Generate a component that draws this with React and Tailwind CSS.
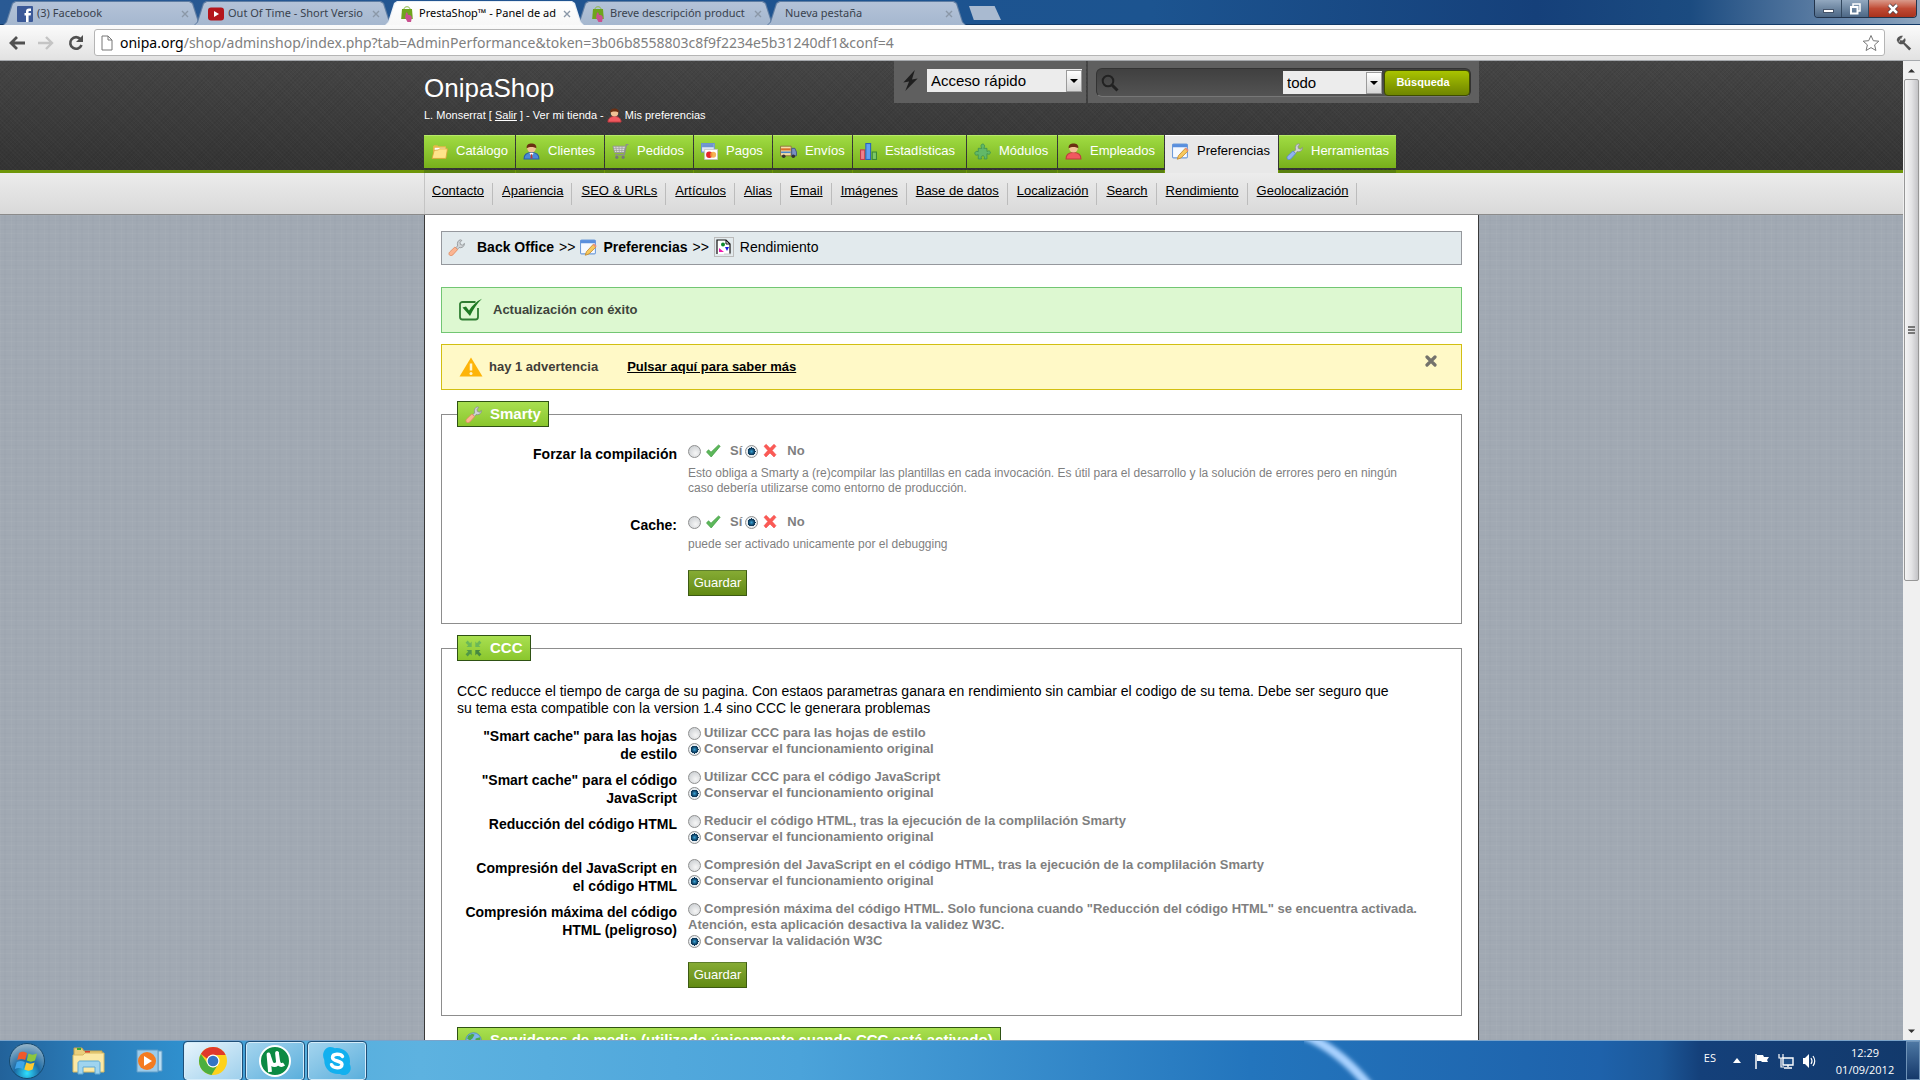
import React, { useState } from 'react';

const browserTabs = [
  { title: '(3) Facebook', icon: 'facebook' },
  { title: 'Out Of Time - Short Versio', icon: 'youtube' },
  { title: 'PrestaShop™ - Panel de ad', icon: 'presta', active: true },
  { title: 'Breve descripción product', icon: 'presta' },
  { title: 'Nueva pestaña' },
];

const menu = [
  { label: 'Catálogo', icon: 'folder', width: 'w-[91px]' },
  { label: 'Clientes', icon: 'client', width: 'w-[88px]' },
  { label: 'Pedidos', icon: 'cart', width: 'w-[88px]' },
  { label: 'Pagos', icon: 'payment', width: 'w-[78px]' },
  { label: 'Envíos', icon: 'truck', width: 'w-[79px]' },
  { label: 'Estadísticas', icon: 'stats', width: 'w-[113px]' },
  { label: 'Módulos', icon: 'module', width: 'w-[90px]' },
  { label: 'Empleados', icon: 'employee', width: 'w-[106px]' },
  { label: 'Preferencias', icon: 'prefs', width: 'w-[113px]', active: true },
  { label: 'Herramientas', icon: 'tools', width: 'w-[117px]' },
];

const submenu = [
  'Contacto', 'Apariencia', 'SEO & URLs', 'Artículos', 'Alias', 'Email', 'Imágenes',
  'Base de datos', 'Localización', 'Search', 'Rendimiento', 'Geolocalización',
];

const smartyRows = [
  {
    name: 'force_compile',
    label: 'Forzar la compilación',
    height: 'h-[71px]',
    help: 'Esto obliga a Smarty a (re)compilar las plantillas en cada invocación. Es útil para el desarrollo y la solución de errores pero en ningún\ncaso debería utilizarse como entorno de producción.',
  },
  {
    name: 'cache',
    label: 'Cache:',
    height: 'h-[57px]',
    help: 'puede ser activado unicamente por el debugging',
  },
];

const cccRows = [
  {
    name: 'css',
    label: '"Smart cache" para las hojas\nde estilo',
    on: 'Utilizar CCC para las hojas de estilo',
    off: 'Conservar el funcionamiento original',
  },
  {
    name: 'js',
    label: '"Smart cache" para el código\nJavaScript',
    on: 'Utilizar CCC para el código JavaScript',
    off: 'Conservar el funcionamiento original',
  },
  {
    name: 'html',
    label: 'Reducción del código HTML',
    on: 'Reducir el código HTML, tras la ejecución de la complilación Smarty',
    off: 'Conservar el funcionamiento original',
  },
  {
    name: 'js_html',
    label: 'Compresión del JavaScript en\nel código HTML',
    on: 'Compresión del JavaScript en el código HTML, tras la ejecución de la complilación Smarty',
    off: 'Conservar el funcionamiento original',
  },
  {
    name: 'high',
    label: 'Compresión máxima del código\nHTML (peligroso)',
    on: 'Compresión máxima del código HTML. Solo funciona cuando "Reducción del código HTML" se encuentra activada.\nAtención, esta aplicación desactiva la validez W3C.',
    off: 'Conservar la validación W3C',
  },
];

const Person = ({ body, dark }) => (
  <>
    <path d="M1 15c0-4 3-6 7-6s7 2 7 6z" fill={body} stroke={dark} strokeWidth="1" />
    <circle cx="8" cy="5" r="4" fill="#f0c295" />
    <path d="M3.500 5C3 1.500 5.500.5 8 .5S13 1.500 12.500 5C11 3.500 6 3 3.500 5z" fill="#6b2f12" />
  </>
);

const Wrench = ({ handle, edge }) => (
  <>
    <path d="M9 6.500 7 8.500l1.500 1.500 2-2c2 .6 4-.3 4.700-2.200l.3-1.600-2 1.600-1.900-.8-.2-1.900L13 1.300l-1.500-.5C9.500 1.200 8.300 3.500 9 6.500z" fill="#cfd3d6" stroke="#85898c" strokeWidth=".7" />
    <path d="M6.500 7.500 9 10l-4.500 5c-1 1-2.300.8-3 .2s-.9-2 .1-3z" fill={handle} stroke={edge} strokeWidth=".8" />
  </>
);

const shapes = {
  facebook: (
    <>
      <rect width="16" height="16" rx="1" fill="#3b5998" />
      <path d="M9 16V9.500H7.500V7H9V5.500C9 3.500 10 2.500 12 2.500h2V5h-1.500c-.7 0-1 .3-1 1v1H14l-.4 2.500h-2V16z" fill="#fff" />
    </>
  ),
  youtube: (
    <>
      <rect width="16" height="13" y="1.500" rx="3" fill="#b4151b" />
      <path d="M6 5v6l5-3z" fill="#fff" />
    </>
  ),
  presta: (
    <>
      <path d="M5 3c0-3 6-3 6 0" fill="none" stroke="#8ab648" strokeWidth="1" />
      <path d="M3 3h10l.8 10H2.200z" fill="#6ea51c" />
      <path d="M7 6.500c1.500-.5 1.800 1 2 2.500 2 0 4 .5 3.800 3L12 16H8.500L6 11.500z" fill="#c9508f" />
    </>
  ),
  folder: (
    <>
      <path d="M2 13V3l1-1h3l1 1h7v10z" fill="#e8b94a" />
      <path d="M3.500 4.500h10v6h-10z" fill="#fff" />
      <path d="M1 14.500 3 7l4-.5L8 5.500h7.500L14 14.500z" fill="#ffe48a" stroke="#dca637" strokeWidth=".8" />
    </>
  ),
  client: (
    <>
      <Person body="#4b8ad8" dark="#2a5ca8" />
      <path d="M6 9.500h4l-2 3z" fill="#fff" />
      <path d="M7.500 10.500h1l.5 4h-2z" fill="#c0392b" />
    </>
  ),
  employee: <Person body="#f0595f" dark="#c03a3f" />,
  cart: (
    <>
      <path d="M15.500 1.500h-2L11.500 11H3" fill="none" stroke="#8d8d8d" strokeWidth="1.300" />
      <path d="M.8 3h12l-1.500 6H2.500z" fill="#dedede" stroke="#909090" strokeWidth=".8" />
      <path d="M3.500 3 4.500 9M6.500 3l.4 6M9.500 3l-.3 6M1.500 5h11M2 7h10" stroke="#9a9a9a" strokeWidth=".7" />
      <circle cx="4.500" cy="13.500" r="1.500" fill="#777" />
      <circle cx="10.500" cy="13.500" r="1.500" fill="#777" />
    </>
  ),
  payment: (
    <>
      <rect x=".5" y=".5" width="12" height="8" fill="#dfe9f7" stroke="#6d93cf" />
      <path d="M1 1h11v3H1z" fill="#6d93cf" />
      <rect x="3.500" y="6" width="12" height="9.500" fill="#fff" stroke="#c5c5c5" strokeWidth=".8" />
      <circle cx="7.800" cy="11" r="3" fill="#e5262b" />
      <circle cx="11.500" cy="11" r="2.800" fill="#f3a73a" opacity=".85" />
    </>
  ),
  truck: (
    <>
      <path d="M.5 3h10v9H.5z" fill="#f4dca4" stroke="#8a6a3b" strokeWidth=".8" />
      <path d="M1 5h9v2H1z" fill="#d9702a" />
      <path d="M1 8h9v1.500H1z" fill="#4b86c8" />
      <path d="M11 5h3l1.500 3.500V12H11z" fill="#7a8fc4" stroke="#3f4f86" strokeWidth=".8" />
      <circle cx="3.500" cy="12.500" r="1.700" fill="#333" />
      <circle cx="12.500" cy="12.500" r="1.700" fill="#333" />
    </>
  ),
  stats: (
    <>
      <rect x=".5" y="6.500" width="4" height="9" fill="#ef7f8b" stroke="#c33c4c" />
      <rect x="5.500" y=".5" width="4.500" height="15" fill="#5ea0f2" stroke="#2a62bd" />
      <rect x="11.500" y="8.500" width="4" height="7" fill="#7cc768" stroke="#3b8a35" />
    </>
  ),
  module: (
    <path d="M5 5h2.500C5.800 2.800 6.800 1 8.200 1s2.600 1.800 1 4h3v3c2-1.200 3.200-.3 3.200 1s-1.200 2.200-3.200 1v5H9.500c1-2-.1-3-1.200-3s-2.200 1-1.200 3H4v-4c-2 1-3.200.2-3.200-1.200S2 7.200 4 8.200V5z" fill="#62b868" stroke="#3f9150" strokeWidth=".8" />
  ),
  prefs: (
    <>
      <rect x=".5" y="1" width="14" height="13" rx="1" fill="#f5f9ff" stroke="#6f9bd8" />
      <path d="M.5 1h14v3H.5z" fill="#5a8fdd" />
      <path d="m6 12 6.500-7L15 7.500 8.500 14l-3.500 1.300z" fill="#f7c95e" stroke="#c48a2d" strokeWidth=".8" />
      <path d="m12 5.500 1.200-1.200 2.500 2.400L14.500 8z" fill="#e88f7a" />
    </>
  ),
  tools: <Wrench handle="#8fb2ee" edge="#5f86cf" />,
  wrench: <Wrench handle="#fbb592" edge="#e08d63" />,
  broken: (
    <>
      <path d="M1 15V1h9l4 4v10" fill="#fff" stroke="#111" strokeWidth="1.200" />
      <path d="M10 1v4h4" fill="none" stroke="#111" strokeWidth="1" />
      <circle cx="7" cy="5.500" r="2" fill="#0b8a2d" />
      <path d="m3 9 5 4H3z" fill="#f019b0" />
      <path d="M9 8h4l-2 4z" fill="#1717e6" />
      <path d="M8 15h7" stroke="#ccc" />
    </>
  ),
  ccc: (
    <g fill="#62b35c" opacity=".85">
      <path d="M.5 2.500 2.500.5 4.800 3 6.300 1.500v5H1.500L3 5z" />
      <path d="M15.500 2.500l-2-2L11.200 3 9.700 1.500v5h4.800L13 5z" />
      <path d="M.5 13.500l2 2L4.800 13l1.500 1.500v-5H1.500L3 11z" fill="#458f4a" />
      <path d="M15.500 13.500l-2 2-2.300-2.500-1.500 1.500v-5h4.800L13 11z" fill="#3a7d42" />
    </g>
  ),
  globe: (
    <>
      <circle cx="8" cy="8" r="7.300" fill="#7db7e8" stroke="#4d86bb" strokeWidth=".8" />
      <path d="M3 3.500c3-2 5-2 6-1L7 6 4.500 8 2 6zM10 6l4-1 .5 4-3 4-2-3z" fill="#4aa94a" />
    </>
  ),
  check: <path d="m1.500 9 2-2.200L6 9.200 13.500 2l1.700 1.200L6.200 14z" fill="#5cb85a" stroke="#3f9a41" strokeWidth=".7" />,
  cross: <path d="m2 3.300 2.200-2L8 5.200l4-4 2 2.100L10.200 7.500l3.800 4.200-2 2.300L8 10l-4 4-2-2.200L5.800 7.500z" fill="#fb5a55" stroke="#f03c3c" strokeWidth=".5" />,
};

const Icon = ({ name, className = 'size-4' }) => (
  <svg viewBox="0 0 16 16" className={`${className} shrink-0`} aria-hidden="true">{shapes[name]}</svg>
);

const BrowserTab = ({ tab }) => (
  <div
    className={`relative -ml-2 h-6 w-[199px] px-px pt-px [clip-path:polygon(0_100%,3px_88%,9px_8%,12px_0,calc(100%-12px)_0,calc(100%-9px)_8%,calc(100%-3px)_88%,100%_100%)] ${tab.active ? 'z-10 bg-[#e8eef5]' : 'bg-[#5f7da3]'}`}
  >
    <div
      className={`flex h-full items-center pl-[13px] pr-[10px] [clip-path:polygon(0_100%,3px_88%,9px_8%,12px_0,calc(100%-12px)_0,calc(100%-9px)_8%,calc(100%-3px)_88%,100%_100%)] ${tab.active ? 'bg-linear-to-b from-white to-[#f7f7f7]' : 'bg-linear-to-b from-[#b4c3d8] to-[#a5b7cf]'}`}
    >
      {tab.icon && <Icon name={tab.icon} className="mr-1 size-4" />}
      <span className={`flex-1 whitespace-nowrap text-[11px] ${tab.icon ? '' : 'pl-1'} ${tab.active ? 'text-black' : 'text-[#39424e]'}`}>
        {tab.title}
      </span>
      <button type="button" aria-label="Cerrar pestaña" className="flex w-3 justify-center">
        <svg viewBox="0 0 8 8" className="size-2"><path d="m1 1 6 6M7 1 1 7" stroke="#8b98a8" strokeWidth="1.400" /></svg>
      </button>
    </div>
  </div>
);

const Browser = () => (
  <div className="shrink-0 font-['Noto_Sans',sans-serif]">
    <div className="flex h-[25px] justify-between border-b border-[#123a68] bg-[linear-gradient(90deg,#2a5a94_0%,#1f5390_30%,#1c5490_60%,#15407a_80%,#1b4b80_88%,#6f8cae_97%,#8ea6bf_100%)]">
      <div className="flex pl-[11px] pt-px">
        {browserTabs.map((tab) => <BrowserTab key={tab.title} tab={tab} />)}
        <button
          type="button"
          aria-label="Nueva pestaña"
          className="ml-[3px] mt-[5px] h-[14px] w-8 bg-[#a9bad0] [clip-path:polygon(0_0,80%_0,100%_100%,15%_100%)]"
        />
      </div>
      <div className="mr-[3px] flex h-[18px] overflow-hidden rounded-b border border-t-0 border-[#22344c]">
        <button type="button" aria-label="Minimizar" className="flex w-[27px] items-end justify-center border-r border-[#33485f] bg-linear-to-b from-[#92a8bf] to-[#4c6785] pb-1">
          <span className="h-1 w-[11px] border border-[#44546a] bg-white" />
        </button>
        <button type="button" aria-label="Restaurar" className="flex w-[27px] items-center justify-center border-r border-[#33485f] bg-linear-to-b from-[#92a8bf] to-[#4c6785]">
          <svg viewBox="0 0 12 12" className="size-3"><path d="M4 3V1h7v7H9" fill="none" stroke="#fff" strokeWidth="1.500" /><path d="M2 4h6.500v6.500H2z" fill="none" stroke="#fff" strokeWidth="2" /></svg>
        </button>
        <button type="button" aria-label="Cerrar" className="flex w-[47px] items-center justify-center bg-linear-to-b from-[#d99a8b] via-[#c04a34] to-[#a8321d]">
          <svg viewBox="0 0 12 12" className="size-3"><path d="m2 2 8 8M10 2l-8 8" stroke="#4b3b42" strokeWidth="4" /><path d="m2 2 8 8M10 2l-8 8" stroke="#fff" strokeWidth="2.500" /></svg>
        </button>
      </div>
    </div>
    <div className="flex h-9 items-center border-b border-[#a6a9ad] bg-linear-to-b from-[#fbfbfb] to-[#e2e2e2] pl-[9px] pr-2">
      <button type="button" aria-label="Atrás">
        <svg viewBox="0 0 16 16" className="size-4"><path d="M8 2 2 8l6 6M2 8h14" fill="none" stroke="#505050" strokeWidth="2.800" /></svg>
      </button>
      <button type="button" aria-label="Adelante" className="ml-[13px]">
        <svg viewBox="0 0 16 16" className="size-4"><path d="m8 2 6 6-6 6M14 8H0" fill="none" stroke="#c4c4c4" strokeWidth="2.400" /></svg>
      </button>
      <button type="button" aria-label="Recargar" className="ml-[14px]">
        <svg viewBox="0 0 16 16" className="size-4"><path d="M12.500 4.200A5.800 5.800 0 1 0 13.500 10" fill="none" stroke="#505050" strokeWidth="2.600" /><path d="M15 0v7H8z" fill="#505050" /></svg>
      </button>
      <div className="ml-[10px] flex h-[27px] flex-1 items-center rounded-[3px] border border-[#b5b5b5] bg-white pl-1.5 pr-1">
        <svg viewBox="0 0 12 16" className="mr-[7px] h-4 w-3"><path d="M1 1h6l4 4v10H1zM7 1v4h4" fill="#fff" stroke="#777" /></svg>
        <span className="flex-1 text-sm text-[#808080]"><span className="text-black">onipa.org</span>/shop/adminshop/index.php?tab=AdminPerformance&amp;token=3b06b8558803c8f9f2234e5b31240df1&amp;conf=4</span>
        <button type="button" aria-label="Añadir a marcadores">
          <svg viewBox="0 0 18 18" className="size-[18px]"><path d="m9 1.500 2.300 5.200 5.500.5-4.200 3.700 1.300 5.600L9 13.600l-4.900 2.900 1.300-5.600L1.200 7.200l5.500-.5z" fill="#fff" stroke="#777" strokeLinejoin="round" /></svg>
        </button>
      </div>
      <button type="button" aria-label="Configuración" className="ml-[11px]">
        <svg viewBox="0 0 16 16" className="size-4"><path d="M7 .8 4.500 3.300l.3 1.900 1.700.3L9 3c1 2 .6 3.400-.4 4.500l6.600 6-2 2-6-6.500C5.500 9.800 2 9.500.8 5.500L3 7.500z" fill="#555" /><path d="M.8 5.500C.5 3 3.500 0 7 .8L4.500 3.300l-1.700 4z" fill="#555" /></svg>
      </button>
    </div>
  </div>
);

const ArrowBox = () => (
  <span className="pointer-events-none absolute inset-y-px right-0 flex w-4 items-center justify-center border border-[#9a9a9a] bg-linear-to-b from-white to-[#d5d5d5]">
    <svg viewBox="0 0 8 4" className="h-1 w-2"><path d="M0 0h8L4 4z" fill="#000" /></svg>
  </span>
);

const Header = () => (
  <header className="border-b-3 border-[#6f9609] bg-[repeating-linear-gradient(45deg,rgba(255,255,255,0.02)_0_1px,transparent_1px_3px),repeating-linear-gradient(135deg,rgba(0,0,0,0.06)_0_1px,transparent_1px_3px),linear-gradient(#454545,#333333)]">
    <div className="mx-auto max-w-[1055px]">
      <div className="flex h-[74px] justify-between">
        <div className="pt-3 text-white">
          <h1 className="text-[26px] leading-[30px]">OnipaShop</h1>
          <p className="mt-1 flex items-center whitespace-pre text-[11px] leading-4">
            L. Monserrat [ <a href="#salir" className="underline">Salir</a> ] - <a href="#tienda">Ver mi tienda</a> -{' '}
            <Icon name="employee" className="mr-[3px] size-[15px]" />
            <a href="#perfil">Mis preferencias</a>
          </p>
        </div>
        <div className="flex h-[42px] gap-0.5">
          <div className="flex items-start bg-[#5f5f5f] pl-2 pr-1 pt-2">
            <svg viewBox="0 0 18 24" className="mr-[7px] h-[23px] w-[18px]"><path d="M13 1 1 14l6-1-4 10L16 10l-6 1z" fill="#1f1f1f" /></svg>
            <div className="relative">
              <select aria-label="Acceso rápido" className="h-[23px] w-[155px] appearance-none bg-[#ececec] pl-1 text-[15px] leading-[23px] text-black">
                <option>Acceso rápido</option>
              </select>
              <ArrowBox />
            </div>
          </div>
          <form className="bg-[#5f5f5f] px-2 pt-[7px]" onSubmit={(e) => e.preventDefault()}>
            <div className="flex h-[29px] w-[375px] items-center rounded-md border border-[#333] border-b-[#777] bg-linear-to-b from-[#404040] to-[#535353] pl-1">
              <svg viewBox="0 0 18 18" className="size-[18px]"><circle cx="7" cy="7" r="5.300" fill="none" stroke="#222" strokeWidth="2" /><path d="m11 11 5.500 5.500" stroke="#222" strokeWidth="3" /></svg>
              <input type="text" aria-label="Buscar" className="h-6 min-w-0 flex-1 bg-transparent px-1 text-[15px] text-white" />
              <div className="relative">
                <select aria-label="Buscar en" className="h-[23px] w-[99px] appearance-none bg-[#ececec] pl-1 text-[15px] leading-[23px] text-black">
                  <option>todo</option>
                </select>
                <ArrowBox />
              </div>
              <button type="submit" className="ml-0.5 h-[26px] w-[86px] rounded border border-[#3e4c00] bg-linear-to-b from-[#a9c400] to-[#6f8500] pr-2 text-[11px] font-bold text-white">Búsqueda</button>
            </div>
          </form>
        </div>
      </div>
      <nav className="-mb-[3px]">
        <ul className="flex h-[38px] gap-px">
          {menu.map((item) => (
            <li key={item.label} className={`${item.width} border-b-3 ${item.active ? 'border-[#e8e8e8] bg-[#e8e8e8]' : 'border-[#59800f]'}`}>
              <a
                href={`#${item.icon}`}
                className={`flex h-[33px] items-center gap-2 border-t pb-0.5 pl-[7px] text-[13px] ${item.active ? 'border-white text-black' : 'border-[#b7ea68] bg-linear-to-b from-[#a0dc42] to-[#78b01a] text-white'}`}
              >
                <Icon name={item.icon} className="size-[17px]" />
                {item.label}
              </a>
            </li>
          ))}
        </ul>
      </nav>
    </div>
  </header>
);

const Submenu = () => (
  <div className="border-b border-[#8b8b8b] bg-linear-to-b from-[#ececec] to-[#d9d9d9]">
    <ul className="mx-auto flex h-[41px] max-w-[1055px] items-start border-l border-[#c4c4c4] pt-[10px]">
      {submenu.map((item) => (
        <li key={item} className="h-[22px] border-r border-[#bcbcbc] pl-[9px] pr-2 text-[13px] leading-4 first:pl-[7px]">
          <a href={`#${item}`} className="text-black underline">{item}</a>
        </li>
      ))}
    </ul>
  </div>
);

const Radio = (props) => (
  <input
    type="radio"
    className="size-[13px] shrink-0 appearance-none rounded-full border border-[#8e8f8f] bg-[radial-gradient(circle_at_60%_65%,#f6f6f6_0,#d0d3d6_75%)] align-[-3px] checked:bg-[radial-gradient(circle,#3aa3d6_0,#0d3c5e_3px,#0d3c5e_4px,#e8ecef_4px)]"
    {...props}
  />
);

const Panel = ({ icon, title, className, children }) => (
  <fieldset className={`border border-[#8d8d8d] px-[15px] ${className}`}>
    <legend className="flex h-[26px] items-center gap-2 border border-[#2f5214] bg-linear-to-b from-[#a9e050] to-[#8ac62c] px-[7px] text-[15px] font-bold leading-6 text-white">
      <Icon name={icon} className="size-[17px]" />
      {title}
    </legend>
    {children}
  </fieldset>
);

const SaveButton = () => (
  <button type="submit" className="ml-[231px] block h-[26px] w-[59px] border border-[#3c5a12] border-t-[#5d7d2b] bg-linear-to-b from-[#86ab34] to-[#628a12] text-[13px] text-white">
    Guardar
  </button>
);

const SmartyRow = ({ row }) => {
  const [value, setValue] = useState('no');
  return (
    <div className={`flex gap-[11px] ${row.height}`}>
      <span className="w-[220px] shrink-0 pt-1 text-right text-[14px] font-bold leading-[18px] text-black">{row.label}</span>
      <div className="text-[#7f7f7f]">
        <div className="flex h-5 items-center text-[13px] font-bold">
          <Radio id={`${row.name}_on`} name={row.name} checked={value === 'si'} onChange={() => setValue('si')} />
          <label htmlFor={`${row.name}_on`} className="ml-1 mr-[3px] flex items-center gap-[9px]">
            <Icon name="check" />Sí
          </label>
          <Radio id={`${row.name}_off`} name={row.name} checked={value === 'no'} onChange={() => setValue('no')} />
          <label htmlFor={`${row.name}_off`} className="ml-1 flex items-center gap-[9px]">
            <Icon name="cross" />No
          </label>
        </div>
        <p className="mt-[5px] whitespace-pre-line text-xs leading-[15px]">{row.help}</p>
      </div>
    </div>
  );
};

const CccRow = ({ row }) => {
  const [value, setValue] = useState('off');
  return (
    <div className="flex min-h-11 gap-[11px]">
      <span className="w-[220px] shrink-0 whitespace-pre pt-1 text-right text-[14px] font-bold leading-[18px] text-black">{row.label}</span>
      <div className="pt-0.5 text-[13px] font-bold leading-4 text-[#7f7f7f]">
        {['on', 'off'].map((key) => (
          <div key={key} className="whitespace-pre-line">
            <Radio
              id={`${row.name}_${key}`}
              name={row.name}
              checked={value === key}
              onChange={() => setValue(key)}
            />
            <label htmlFor={`${row.name}_${key}`} className="ml-[3px]">{row[key]}</label>
          </div>
        ))}
      </div>
    </div>
  );
};

const Content = () => (
  <main className="mx-auto max-w-[1055px] border-x border-[#3a3a3a] bg-white px-4 pb-10 pt-4">
    <div className="flex h-[34px] items-center border border-[#95989d] bg-[#e2eaed] pb-0.5 pl-1.5 text-sm text-black">
      <Icon name="wrench" className="mr-3 size-[17px]" />
      <a href="#inicio" className="font-bold">Back Office</a>
      <span className="mx-[5px]">&gt;&gt;</span>
      <Icon name="prefs" className="mr-1.5 size-[17px]" />
      <a href="#preferencias" className="font-bold">Preferencias</a>
      <span className="mx-[5px]">&gt;&gt;</span>
      <span className="mr-1.5 border border-[#bbb] p-px"><Icon name="broken" /></span>
      Rendimiento
    </div>

    <div className="mt-[22px] flex h-[46px] items-center border border-[#72c673] bg-[#ddf8d1] pl-4 text-[13px] font-bold text-[#3d443c]">
      <svg viewBox="0 0 24 24" className="mr-[11px] size-6">
        <path d="M17.500 4H4.500C3 4 2 5 2 6v13c0 1.500 1 2.500 2.500 2.500h13c1.500 0 2.500-1 2.500-2.500V10" fill="none" stroke="#2f7d32" strokeWidth="1.800" />
        <path d="m4.500 9.500 3.500-1 3 4C14 8 18 3.500 24 .8 19 5.500 15 11.500 12 18z" fill="#1f7a24" />
      </svg>
      Actualización con éxito
    </div>

    <div className="mt-[11px] flex h-[46px] items-center border border-[#d2bf12] bg-[#fff9c7] pl-[17px] pr-6 text-[13px] font-bold text-[#3f3d38]">
      <svg viewBox="0 0 24 20" className="mr-1.5 h-5 w-6">
        <path d="M12 .5 23.500 19.500H.5z" fill="#fdb409" />
        <path d="M12 6.500v7" stroke="#fff6d0" strokeWidth="2.500" />
        <circle cx="12" cy="16.500" r="1.500" fill="#fff6d0" />
      </svg>
      hay 1 advertencia
      <a href="#advertencias" className="ml-[29px] text-black underline">Pulsar aquí para saber más</a>
      <button type="button" aria-label="Cerrar" className="mb-3 ml-auto">
        <svg viewBox="0 0 12 12" className="size-3"><path d="m2 2 8 8M10 2l-8 8" stroke="#74736c" strokeWidth="3.200" strokeLinecap="round" /></svg>
      </button>
    </div>

    <form onSubmit={(e) => e.preventDefault()}>
      <Panel icon="wrench" title="Smarty" className="mt-[11px] pb-[27px]">
        <div className="pt-[14px]">
          {smartyRows.map((row) => <SmartyRow key={row.name} row={row} />)}
        </div>
        <div className="pt-px"><SaveButton /></div>
      </Panel>
    </form>

    <form onSubmit={(e) => e.preventDefault()}>
      <Panel icon="ccc" title="CCC" className="mt-[11px] pb-[27px]">
        <p className="whitespace-pre-line pb-1.5 pt-[22px] text-[14px] leading-[17px] text-black">
          {'CCC reducce el tiempo de carga de su pagina. Con estaos parametras ganara en rendimiento sin cambiar el codigo de su tema. Debe ser seguro que\nsu tema esta compatible con la version 1.4 sino CCC le generara problemas'}
        </p>
        {cccRows.map((row) => <CccRow key={row.name} row={row} />)}
        <div className="pt-[13px]"><SaveButton /></div>
      </Panel>
    </form>

    <Panel icon="globe" title="Servidores de media (utilizado únicamente cuando CCC está activado)" className="mt-[11px] pb-10" />
  </main>
);

const ScrollBar = () => (
  <div className="flex w-[17px] shrink-0 flex-col items-center bg-[#f0f0f0]">
    <svg viewBox="0 0 17 18" className="h-[18px] w-[17px]"><path d="M5 11.500 8.500 8l3.500 3.500z" fill="#333" /></svg>
    <div className="flex h-[502px] w-[15px] flex-col items-center justify-center gap-px rounded-xs border border-[#979797] bg-linear-to-r from-[#f5f5f5] via-[#e3e3e5] to-[#c3c3c6]">
      <span className="h-0.5 w-[7px] bg-[#777]" />
      <span className="h-0.5 w-[7px] bg-[#777]" />
      <span className="h-0.5 w-[7px] bg-[#777]" />
    </div>
    <svg viewBox="0 0 17 18" className="mt-auto h-[18px] w-[17px]"><path d="M5 7.500h7L8.500 11z" fill="#333" /></svg>
  </div>
);

const taskButton = 'flex h-[38px] w-[58px] items-center justify-center rounded-[3px] border border-[#d4ecfa] outline outline-[#1f4f78]';

const TaskBar = () => (
  <footer className="flex h-10 shrink-0 items-center border-t border-[#7ba3c9] bg-[linear-gradient(90deg,#22629a_0,#2b7dba_90px,#2f8fcd_180px,#55aedd_300px,#5db2e0_420px,#4ba3da_800px,#2375bd_1250px,#1e62ab_1600px,#1c5899_1660px,#14407a_1700px,#12396b_100%)] font-['Open_Sans',sans-serif] text-white">
    <button type="button" aria-label="Inicio" className="ml-2">
      <svg viewBox="0 0 38 38" className="size-[38px]">
        <defs>
          <radialGradient id="orb" cx="50%" cy="85%" r="80%">
            <stop offset="0" stopColor="#2ee0ff" />
            <stop offset=".45" stopColor="#1b6aa5" />
            <stop offset="1" stopColor="#8fb0c6" />
          </radialGradient>
        </defs>
        <circle cx="19" cy="19" r="17.500" fill="url(#orb)" stroke="#15496f" />
        <path d="M11 11c3-2 5-1.500 8 0l-1.800 7c-3-1.500-5-1.500-8 0z" fill="#f0592a" />
        <path d="M20.500 11.500c3 1.500 5 1.500 8.500 0l-2 7c-3 1.500-5 1.500-8.300 0z" fill="#8cc63e" />
        <path d="M8.800 20c3-1.500 5-1.500 8 0l-2 7c-3-1.500-5-1.500-8 0z" fill="#3fa4e8" />
        <path d="M18.300 20.500c3 1.500 5 1.500 8.300 0l-2 7c-3 1.500-5 1.500-8.300 0z" fill="#fdc931" />
      </svg>
    </button>
    <button type="button" aria-label="Explorador" className="ml-[26px]">
      <svg viewBox="0 0 34 30" className="h-[30px] w-[34px]">
        <path d="M2 25V2h8l2 3h18v20z" fill="#e9cf7c" stroke="#c4a24a" />
        <path d="M5 2h4v2H5z" fill="#3aa935" />
        <path d="M13 5h5v2h-5z" fill="#d9432f" />
        <path d="M21 7h6v2h-6z" fill="#3b8fd6" />
        <path d="M1 9h10l2-2h19v19H1z" fill="#fbe9a6" stroke="#d8b961" />
        <path d="M6 28V17c0-1 1-2 2-2h18c1 0 2 1 2 2v11h-5v-7H11v7z" fill="#9fd4ef" stroke="#5fa9d4" />
      </svg>
    </button>
    <button type="button" aria-label="Reproductor" className="ml-[30px]">
      <svg viewBox="0 0 30 26" className="h-[26px] w-[30px]">
        <path d="M22 3h4v20h-4z" fill="#b9dcf1" stroke="#5f9cc7" />
        <path d="M1 2h21v22H1z" fill="#9ccbea" stroke="#5f9cc7" />
        <circle cx="11" cy="13" r="9" fill="#f47b20" />
        <path d="M8 8v10l8-5z" fill="#fff" />
      </svg>
    </button>
    <div className="ml-[18px] flex gap-1">
      <button type="button" aria-label="Chrome" className={`${taskButton} bg-linear-to-br from-[#e6f4fc] to-[#9fd0ec]`}>
        <svg viewBox="0 0 30 30" className="size-[30px]">
          <circle cx="15" cy="15" r="14" fill="#fdd21c" />
          <path d="M2.900 8A14 14 0 0 1 27.600 9H15a6 6 0 0 0-5.500 4z" fill="#e0392b" />
          <path d="M2.900 8A14 14 0 0 0 13.500 29l5.500-9a6 6 0 0 1-9.200-2z" fill="#4caf3f" />
          <circle cx="15" cy="15" r="6.500" fill="#fff" />
          <circle cx="15" cy="15" r="5.300" fill="#3574c4" />
        </svg>
      </button>
      <button type="button" aria-label="uTorrent" className={`${taskButton} bg-linear-to-br from-[#a3d4ee] to-[#5aafdc]`}>
        <svg viewBox="0 0 32 32" className="size-8">
          <circle cx="16" cy="16" r="15" fill="#0c8a43" stroke="#fff" strokeWidth="2" />
          <path d="M11 27 9.500 9.500 12 17c1 4 6 4 7 0l-1-9 1 7c.5 5 3 6 6 4" fill="none" stroke="#fff" strokeWidth="3.800" strokeLinejoin="round" />
        </svg>
      </button>
      <button type="button" aria-label="Skype" className={`${taskButton} bg-linear-to-br from-[#a3d4ee] to-[#5aafdc]`}>
        <svg viewBox="0 0 30 30" className="size-[30px]">
          <path d="M8 1c3 0 4 1 5 1.200C20 1 28 6 28 15c0 1 0 2-.3 3C31 24 26 30 21 29c-1 0-2-.5-3-1C9 29 2 23 2.300 14 -1 8 3 1 8 1z" fill="#12b0ef" />
          <path d="M20.500 10.500C19 7.500 10.500 7 10.500 11.500c0 4.500 9.500 2.500 9.500 7 0 4.500-9 4-10.500.2" fill="none" stroke="#fff" strokeWidth="3.400" strokeLinecap="round" />
        </svg>
      </button>
    </div>
    <div className="ml-auto flex h-full items-center">
      <svg viewBox="0 0 90 39" className="mr-[310px] h-full w-[90px]">
        <defs>
          <filter id="soft"><feGaussianBlur stdDeviation="2" /></filter>
        </defs>
        <path d="M0-6Q35 8 66 46" fill="none" stroke="#a9d2ff" strokeWidth="9" filter="url(#soft)" />
      </svg>
      <span className="mb-1 text-[11px]">ES</span>
      <svg viewBox="0 0 8 5" className="ml-[17px] h-[5px] w-2"><path d="M0 5 4 0l4 5z" fill="#fff" /></svg>
      <svg viewBox="0 0 16 16" className="ml-[13px] size-4"><path d="M2 1v15" stroke="#fff" strokeWidth="1.500" /><path d="M3 2h6l1 2h5l-2 3 1 2H8L7 8H3z" fill="#fff" /></svg>
      <svg viewBox="0 0 16 16" className="ml-2 size-4"><path d="M5 5h10v7H5zM10 12v2M6 15h8" fill="#1d4d86" stroke="#fff" strokeWidth="1.400" /><path d="M1 1v4h4V1M3 5v9h3" fill="none" stroke="#fff" strokeWidth="1.200" /></svg>
      <svg viewBox="0 0 16 16" className="ml-2 size-4"><path d="M1 5h2l4-4v14l-4-4H1z" fill="#fff" /><path d="M9 5q2 3 0 6M11 3q3.500 5 0 10" fill="none" stroke="#fff" strokeWidth="1.200" /></svg>
      <div className="ml-3.5 w-[66px] text-center text-[11px] leading-[17px]">
        <div>12:29</div>
        <div>01/09/2012</div>
      </div>
      <button type="button" aria-label="Mostrar escritorio" className="ml-2 h-full w-[14px] border border-[#6f93b8] bg-linear-to-b from-[#4d77a3] to-[#15396a]" />
    </div>
  </footer>
);

const App = () => (
  <div className="flex h-screen flex-col overflow-hidden">
    <Browser />
    <div className="flex min-h-0 flex-1">
      <div className="min-w-0 flex-1 overflow-hidden bg-[#a1a9b3] bg-[repeating-linear-gradient(90deg,rgba(255,255,255,0.03)_0_1px,transparent_1px_4px,rgba(60,70,90,0.02)_4px_6px,transparent_6px_11px),repeating-linear-gradient(0deg,rgba(60,70,90,0.02)_0_1px,transparent_1px_5px,rgba(255,255,255,0.03)_5px_6px,transparent_6px_9px)] font-['Liberation_Sans',Arial,sans-serif]">
        <Header />
        <Submenu />
        <Content />
      </div>
      <ScrollBar />
    </div>
    <TaskBar />
  </div>
);

export default App;
